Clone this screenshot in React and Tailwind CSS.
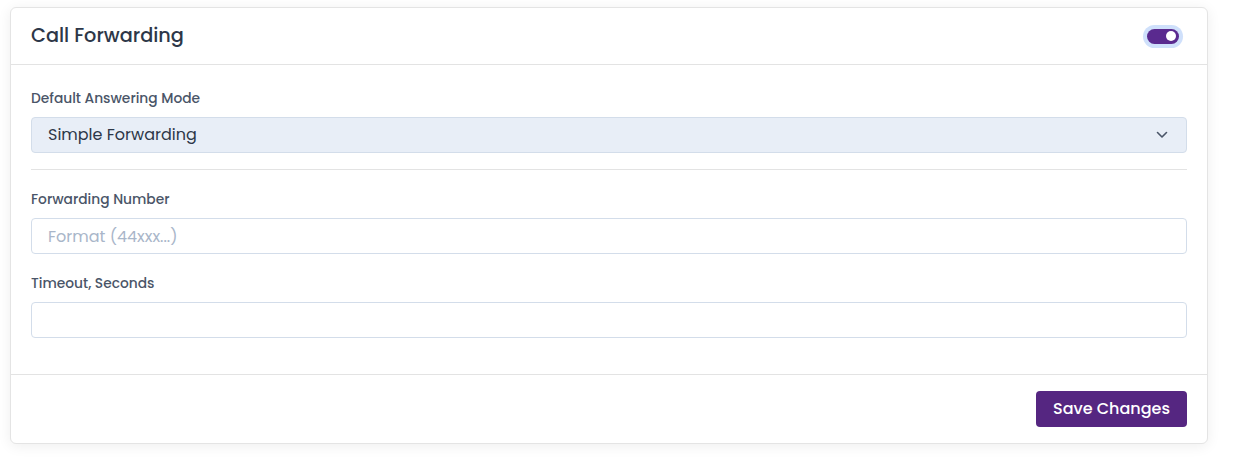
import React from "react";

export default function App() {
  const font = { fontFamily: "Poppins, 'Open Sans', 'Noto Sans', sans-serif" };
  return (
    <div className="min-h-[464px] w-[1243px] bg-white pt-[7px] pl-[10px]" style={font}>
      <div className="w-[1198px] rounded-[6px] border border-[#e4e4e4] bg-white shadow-[0_2px_14px_rgba(0,0,0,0.07)]">
        <div className="flex h-[57px] items-center justify-between border-b border-[#e3e3e3] pl-[20px] pr-[24px]">
          <h2 className="text-[19.3px] font-medium text-[#2d3748]">Call Forwarding</h2>
          <div className="flex h-[23px] w-[40px] items-center rounded-full bg-[#cfe0fb] p-[4px]">
            <div className="flex h-[15px] w-full items-center justify-end rounded-full bg-[#5a2a8f] pr-[3px]">
              <div className="h-[10px] w-[10px] rounded-full bg-white" />
            </div>
          </div>
        </div>
        <div className="px-[20px] pt-[24px] pb-[36px]">
          <label className="block text-[13.8px] font-medium leading-[20px] text-[#4a5568]">Default Answering Mode</label>
          <div className="mt-[8px] flex h-[36px] items-center justify-between rounded-[4px] border border-[#d3ddea] bg-[#e8eef7] pl-[16px] pr-[18px]">
            <span className="text-[16px] text-[#2d3748]">Simple Forwarding</span>
            <svg width="12" height="8" viewBox="0 0 12 8" fill="none">
              <path d="M1.5 1.5 L6 6 L10.5 1.5" stroke="#4a5568" strokeWidth="1.6" strokeLinecap="round" strokeLinejoin="round" />
            </svg>
          </div>
          <div className="mt-[16px] border-t border-[#e3e3e3]" />
          <label className="mt-[20px] block text-[13.8px] font-medium leading-[20px] text-[#4a5568]">Forwarding Number</label>
          <input
            className="mt-[8px] block h-[36px] w-full rounded-[4px] border border-[#d3ddea] bg-white pl-[16px] text-[16px] text-[#2d3748] placeholder:text-[#a9b6c9] outline-none"
            placeholder="Format (44xxx...)"
            style={font}
          />
          <label className="mt-[20px] block text-[13.8px] font-medium leading-[20px] text-[#4a5568]">Timeout, Seconds</label>
          <input
            className="mt-[8px] block h-[36px] w-full rounded-[4px] border border-[#d3ddea] bg-white pl-[16px] text-[16px] text-[#2d3748] outline-none"
            style={font}
          />
        </div>
        <div className="flex justify-end border-t border-[#e3e3e3] px-[20px] py-[16px]">
          <button className="h-[36px] w-[151px] rounded-[4px] bg-[#552681] text-[16px] font-medium text-white" style={font}>
            Save Changes
          </button>
        </div>
      </div>
    </div>
  );
}
